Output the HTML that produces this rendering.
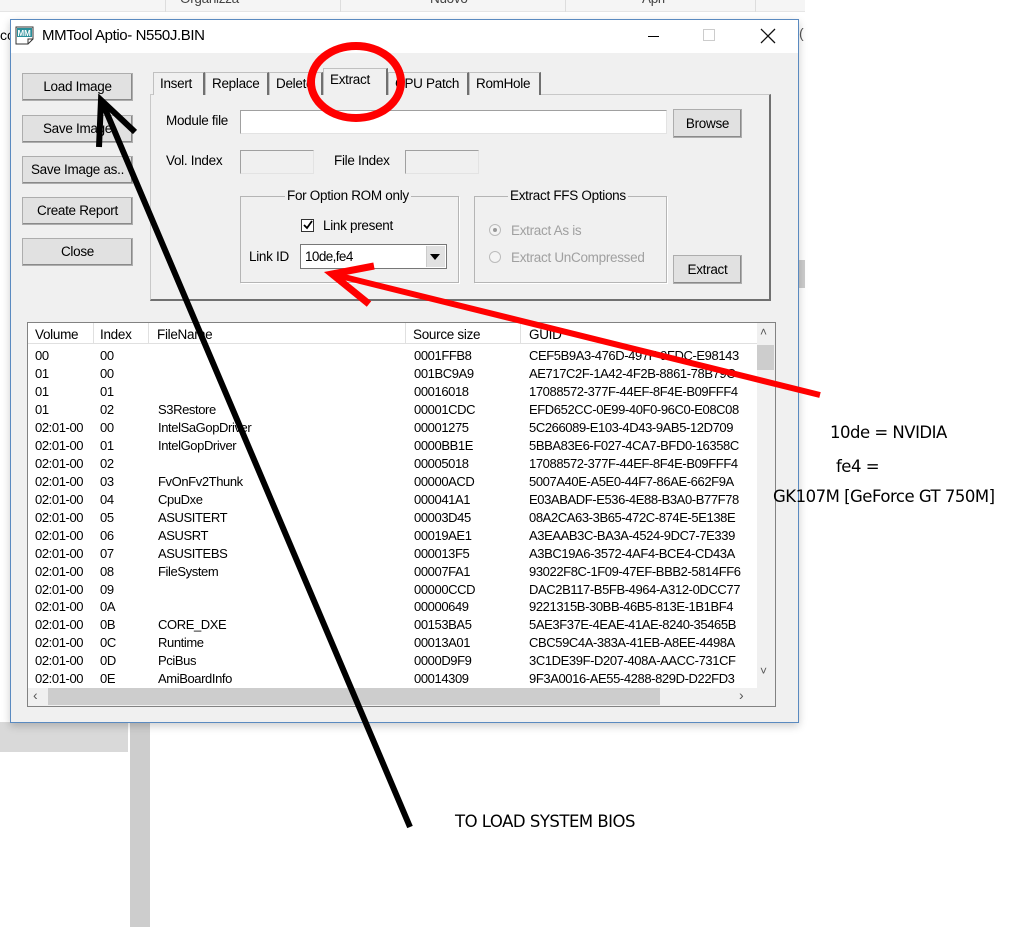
<!DOCTYPE html>
<html><head><meta charset="utf-8"><style>
*{margin:0;padding:0;box-sizing:border-box}
body{width:1024px;height:927px;background:#fff;position:relative;overflow:hidden;font-family:"Liberation Sans",sans-serif;font-size:13px;color:#000}
.a{position:absolute;white-space:nowrap}
.btn{position:absolute;background:#e1e1e1;border:1px solid #adadad;box-shadow:inset -1px -1px 0 #8a8a8a;text-align:center;font-size:13.5px;letter-spacing:-.3px;white-space:nowrap}
.in{position:absolute;background:#fff;border:1px solid #a0a0a0;border-right-color:#e3e3e3;border-bottom-color:#e3e3e3}
.ine{position:absolute;background:#f0f0f0;border:1px solid #a0a0a0;border-right-color:#e3e3e3;border-bottom-color:#e3e3e3}
.grp{position:absolute;border:1px solid #b5b5b5;box-shadow:1px 1px 0 #fff}
.lbl{position:absolute;background:#f0f0f0;padding:0 2px;font-size:13.5px;letter-spacing:-.3px;white-space:nowrap}
.t{font-size:13.5px;letter-spacing:-.3px}
.tab{position:absolute;top:72px;height:23px;border:1px solid #c0c0c0;border-bottom:none;border-right:2px solid #707070;background:#f0f0f0;padding:3px 6px 0;font-size:13.5px;letter-spacing:-.3px;white-space:nowrap;overflow:hidden}
.row{position:absolute;left:35px;height:18px;font-size:13px;letter-spacing:-.4px;width:722px}
.row span{position:absolute;top:0;white-space:nowrap}
.note{position:absolute;font-family:"DejaVu Sans",sans-serif;font-size:16.5px;white-space:nowrap;letter-spacing:-.5px}
</style></head><body>
<div class="a" style="left:0;top:0;width:805px;height:12px;background:#f5f5f5;border-bottom:1px solid #e5e5e5"></div>
<div class="a" style="left:165px;top:0;width:1px;height:12px;background:#ddd"></div>
<div class="a" style="left:340px;top:0;width:1px;height:12px;background:#ddd"></div>
<div class="a" style="left:565px;top:0;width:1px;height:12px;background:#ddd"></div>
<div class="a" style="left:755px;top:0;width:1px;height:12px;background:#ddd"></div>
<div class="a t" style="left:180px;top:-9px;color:#444">Organizza</div>
<div class="a t" style="left:430px;top:-9px;color:#444">Nuovo</div>
<div class="a t" style="left:642px;top:-9px;color:#444">Apri</div>
<div class="a" style="left:0;top:27px;font-size:14px">co</div>
<div class="a" style="left:799px;top:25px;font-size:14px;color:#555">(</div>
<div class="a" style="left:798px;top:260px;width:7px;height:28px;background:#ccc"></div>
<div class="a" style="left:0;top:722px;width:128px;height:30px;background:#d9d9d9"></div>
<div class="a" style="left:130px;top:722px;width:20px;height:205px;background:#cdcdcd"></div>

<div class="a" style="left:10px;top:19px;width:789px;height:704px;background:#f0f0f0;border:1px solid #5a8ac0;box-shadow:0 3px 8px rgba(0,0,0,.2)"></div>
<div class="a" style="left:11px;top:20px;width:787px;height:33px;background:#fff"></div>
<svg class="a" style="left:14px;top:25px" width="22" height="22" viewBox="0 0 22 22"><path d="M2 2h17v12l-5 5H2z" fill="#fff" stroke="#333"/><path d="M14 19v-5h5" fill="none" stroke="#333"/><rect x="3" y="3" width="15" height="9" fill="#2a8f9a"/><text x="3.5" y="11" font-size="8" fill="#fff" font-family="Liberation Sans" font-weight="bold">MM</text></svg>
<div class="a" style="left:42px;top:27px;font-size:15px;letter-spacing:-.4px">MMTool Aptio- N550J.BIN</div>
<div class="a" style="left:648px;top:36px;width:11px;height:1px;background:#000"></div>
<div class="a" style="left:703px;top:29px;width:12px;height:12px;border:1px solid #ccc"></div>
<svg class="a" style="left:760px;top:28px" width="16" height="16"><path d="M1 1L15 15M15 1L1 15" stroke="#111" stroke-width="1.3"/></svg>

<div class="btn" style="left:22px;top:73px;width:111px;height:28px;line-height:26px">Load Image</div>
<div class="btn" style="left:22px;top:115px;width:111px;height:28px;line-height:26px">Save Image</div>
<div class="btn" style="left:22px;top:156px;width:111px;height:28px;line-height:26px">Save Image as..</div>
<div class="btn" style="left:22px;top:197px;width:111px;height:28px;line-height:26px">Create Report</div>
<div class="btn" style="left:22px;top:238px;width:111px;height:28px;line-height:26px">Close</div>

<div class="a" style="left:150px;top:94px;width:621px;height:207px;border:1px solid #c8c8c8;border-right:2px solid #707070;border-bottom:2px solid #707070"></div>
<div class="tab" style="left:153px;width:52px">Insert</div>
<div class="tab" style="left:205px;width:64px">Replace</div>
<div class="tab" style="left:269px;width:54px">Delete</div>
<div class="tab" style="left:323px;top:68px;height:27px;width:65px;background:#f0f0f0;z-index:2">Extract</div>
<div class="tab" style="left:388px;width:81px">CPU Patch</div>
<div class="tab" style="left:469px;width:72px">RomHole</div>

<div class="a t" style="left:166px;top:113px">Module file</div>
<div class="in" style="left:240px;top:110px;width:427px;height:24px"></div>
<div class="btn" style="left:673px;top:109px;width:69px;height:29px;line-height:27px">Browse</div>
<div class="a t" style="left:166px;top:153px">Vol. Index</div>
<div class="ine" style="left:240px;top:150px;width:74px;height:24px"></div>
<div class="a t" style="left:334px;top:153px">File Index</div>
<div class="ine" style="left:405px;top:150px;width:74px;height:24px"></div>

<div class="grp" style="left:240px;top:196px;width:219px;height:87px"></div>
<div class="lbl" style="left:285px;top:188px">For Option ROM only</div>
<div class="a" style="left:301px;top:219px;width:13px;height:13px;border:1px solid #333;background:#fff"></div>
<svg class="a" style="left:302px;top:220px" width="11" height="11"><path d="M2 5l3 3 5-7" stroke="#000" stroke-width="1.8" fill="none"/></svg>
<div class="a t" style="left:323px;top:218px">Link present</div>
<div class="a t" style="left:249px;top:249px">Link ID</div>
<div class="in" style="left:300px;top:244px;width:147px;height:25px;border-color:#777"></div>
<div class="a" style="left:305px;top:249px;font-size:13.5px;letter-spacing:-.6px">10de,fe4</div>
<div class="a" style="left:426px;top:246px;width:19px;height:21px;background:#e1e1e1;border-left:1px solid #ccc"></div>
<svg class="a" style="left:430px;top:254px" width="10" height="6"><path d="M0 0h10L5 6z" fill="#000"/></svg>

<div class="grp" style="left:474px;top:196px;width:193px;height:87px"></div>
<div class="lbl" style="left:508px;top:188px">Extract FFS Options</div>
<div class="a" style="left:489px;top:224px;width:12px;height:12px;border-radius:50%;border:1px solid #bbb;background:#f4f4f4"></div>
<div class="a" style="left:493px;top:228px;width:4px;height:4px;border-radius:50%;background:#999"></div>
<div class="a t" style="left:511px;top:223px;color:#a0a0a0">Extract As is</div>
<div class="a" style="left:489px;top:251px;width:12px;height:12px;border-radius:50%;border:1px solid #bbb;background:#f4f4f4"></div>
<div class="a t" style="left:511px;top:250px;color:#a0a0a0">Extract UnCompressed</div>
<div class="btn" style="left:673px;top:255px;width:69px;height:29px;line-height:27px">Extract</div>

<div class="a" style="left:27px;top:322px;width:749px;height:385px;background:#fff;border:1px solid #828282"></div>
<div class="a" style="left:28px;top:323px;width:729px;height:21px;background:#fff;border-bottom:1px solid #e0e0e0"></div>
<div class="a" style="left:93px;top:323px;width:1px;height:21px;background:#e0e0e0"></div>
<div class="a" style="left:148px;top:323px;width:1px;height:21px;background:#e0e0e0"></div>
<div class="a" style="left:405px;top:323px;width:1px;height:21px;background:#e0e0e0"></div>
<div class="a" style="left:520px;top:323px;width:1px;height:21px;background:#e0e0e0"></div>
<div class="a t" style="left:35px;top:327px">Volume</div>
<div class="a t" style="left:100px;top:327px">Index</div>
<div class="a t" style="left:157px;top:327px">FileName</div>
<div class="a t" style="left:413px;top:327px">Source size</div>
<div class="a t" style="left:529px;top:327px">GUID</div>

<div style="position:absolute;left:0;top:0;width:757px;height:688px;overflow:hidden">
<div class="row" style="top:348px"><span>00</span><span style="left:65px">00</span><span style="left:379px">0001FFB8</span><span style="left:494px">CEF5B9A3-476D-497F-9FDC-E98143</span></div>
<div class="row" style="top:366px"><span>01</span><span style="left:65px">00</span><span style="left:379px">001BC9A9</span><span style="left:494px">AE717C2F-1A42-4F2B-8861-78B79C</span></div>
<div class="row" style="top:384px"><span>01</span><span style="left:65px">01</span><span style="left:379px">00016018</span><span style="left:494px">17088572-377F-44EF-8F4E-B09FFF4</span></div>
<div class="row" style="top:402px"><span>01</span><span style="left:65px">02</span><span style="left:123px">S3Restore</span><span style="left:379px">00001CDC</span><span style="left:494px">EFD652CC-0E99-40F0-96C0-E08C08</span></div>
<div class="row" style="top:420px"><span>02:01-00</span><span style="left:65px">00</span><span style="left:123px">IntelSaGopDriver</span><span style="left:379px">00001275</span><span style="left:494px">5C266089-E103-4D43-9AB5-12D709</span></div>
<div class="row" style="top:438px"><span>02:01-00</span><span style="left:65px">01</span><span style="left:123px">IntelGopDriver</span><span style="left:379px">0000BB1E</span><span style="left:494px">5BBA83E6-F027-4CA7-BFD0-16358C</span></div>
<div class="row" style="top:456px"><span>02:01-00</span><span style="left:65px">02</span><span style="left:379px">00005018</span><span style="left:494px">17088572-377F-44EF-8F4E-B09FFF4</span></div>
<div class="row" style="top:474px"><span>02:01-00</span><span style="left:65px">03</span><span style="left:123px">FvOnFv2Thunk</span><span style="left:379px">00000ACD</span><span style="left:494px">5007A40E-A5E0-44F7-86AE-662F9A</span></div>
<div class="row" style="top:492px"><span>02:01-00</span><span style="left:65px">04</span><span style="left:123px">CpuDxe</span><span style="left:379px">000041A1</span><span style="left:494px">E03ABADF-E536-4E88-B3A0-B77F78</span></div>
<div class="row" style="top:510px"><span>02:01-00</span><span style="left:65px">05</span><span style="left:123px">ASUSITERT</span><span style="left:379px">00003D45</span><span style="left:494px">08A2CA63-3B65-472C-874E-5E138E</span></div>
<div class="row" style="top:528px"><span>02:01-00</span><span style="left:65px">06</span><span style="left:123px">ASUSRT</span><span style="left:379px">00019AE1</span><span style="left:494px">A3EAAB3C-BA3A-4524-9DC7-7E339</span></div>
<div class="row" style="top:546px"><span>02:01-00</span><span style="left:65px">07</span><span style="left:123px">ASUSITEBS</span><span style="left:379px">000013F5</span><span style="left:494px">A3BC19A6-3572-4AF4-BCE4-CD43A</span></div>
<div class="row" style="top:564px"><span>02:01-00</span><span style="left:65px">08</span><span style="left:123px">FileSystem</span><span style="left:379px">00007FA1</span><span style="left:494px">93022F8C-1F09-47EF-BBB2-5814FF6</span></div>
<div class="row" style="top:582px"><span>02:01-00</span><span style="left:65px">09</span><span style="left:379px">00000CCD</span><span style="left:494px">DAC2B117-B5FB-4964-A312-0DCC77</span></div>
<div class="row" style="top:599px"><span>02:01-00</span><span style="left:65px">0A</span><span style="left:379px">00000649</span><span style="left:494px">9221315B-30BB-46B5-813E-1B1BF4</span></div>
<div class="row" style="top:617px"><span>02:01-00</span><span style="left:65px">0B</span><span style="left:123px">CORE_DXE</span><span style="left:379px">00153BA5</span><span style="left:494px">5AE3F37E-4EAE-41AE-8240-35465B</span></div>
<div class="row" style="top:635px"><span>02:01-00</span><span style="left:65px">0C</span><span style="left:123px">Runtime</span><span style="left:379px">00013A01</span><span style="left:494px">CBC59C4A-383A-41EB-A8EE-4498A</span></div>
<div class="row" style="top:653px"><span>02:01-00</span><span style="left:65px">0D</span><span style="left:123px">PciBus</span><span style="left:379px">0000D9F9</span><span style="left:494px">3C1DE39F-D207-408A-AACC-731CF</span></div>
<div class="row" style="top:671px"><span>02:01-00</span><span style="left:65px">0E</span><span style="left:123px">AmiBoardInfo</span><span style="left:379px">00014309</span><span style="left:494px">9F3A0016-AE55-4288-829D-D22FD3</span></div>
</div>
<div class="a" style="left:757px;top:323px;width:18px;height:365px;background:#f0f0f0"></div>
<div class="a" style="left:757px;top:345px;width:17px;height:25px;background:#cdcdcd"></div>
<div class="a" style="left:760px;top:325px;font-size:12px;color:#555">&#x2c4;</div>
<div class="a" style="left:760px;top:664px;font-size:12px;color:#555">&#x2c5;</div>
<div class="a" style="left:28px;top:688px;width:747px;height:18px;background:#f0f0f0"></div>
<div class="a" style="left:48px;top:688px;width:612px;height:17px;background:#cdcdcd"></div>
<div class="a" style="left:33px;top:687px;font-size:14px;color:#555">&#x2039;</div>
<div class="a" style="left:739px;top:687px;font-size:14px;color:#555">&#x203a;</div>

<svg class="a" style="left:0;top:0" width="1024" height="927">
<line x1="410" y1="827" x2="103" y2="104" stroke="#000" stroke-width="6"/>
<path d="M99 147L101 100L135 132" fill="none" stroke="#000" stroke-width="6"/>
<line x1="820" y1="395" x2="340" y2="276" stroke="#f00" stroke-width="6"/>
<path d="M374 266L332 274L369 304" fill="none" stroke="#f00" stroke-width="7"/>
<ellipse cx="356" cy="82" rx="45" ry="36" fill="none" stroke="#f00" stroke-width="8"/>
</svg>
<div class="note" style="left:830px;top:423px">10de = NVIDIA</div>
<div class="note" style="left:836px;top:457px">fe4 =</div>
<div class="note" style="left:773px;top:487px">GK107M [GeForce GT 750M]</div>
<div class="note" style="left:455px;top:812px">TO LOAD SYSTEM BIOS</div>
</body></html>
